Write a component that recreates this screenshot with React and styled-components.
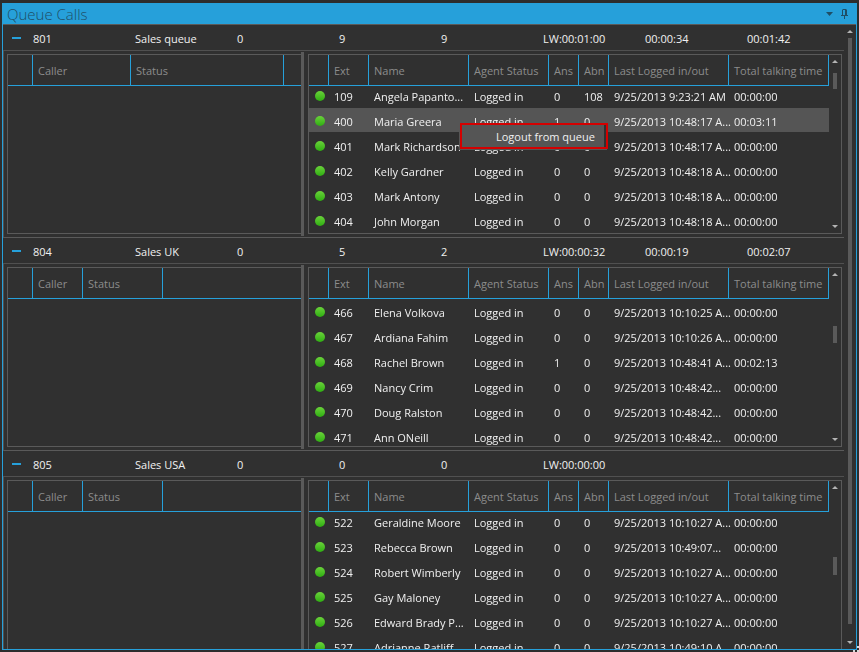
import React, { useLayoutEffect, useRef } from "react";
import styled, { createGlobalStyle } from "styled-components";

const queues = [
  {
    number: "801",
    name: "Sales queue",
    stats: ["0", "9", "9", "LW:00:01:00", "00:00:34", "00:01:42"],
    callerWidth: 98,
    statusWidth: 153,
    scroll: 3,
    thumb: { top: 5, height: 16 },
    agents: [
      ["109", "Angela Papanto...", "0", "108", "9/25/2013 9:23:21 AM", "00:00:00"],
      ["400", "Maria Greera", "1", "0", "9/25/2013 10:48:17 A...", "00:03:11"],
      ["401", "Mark Richardson", "0", "0", "9/25/2013 10:48:17 A...", "00:00:00"],
      ["402", "Kelly Gardner", "0", "0", "9/25/2013 10:48:18 A...", "00:00:00"],
      ["403", "Mark Antony", "0", "0", "9/25/2013 10:48:18 A...", "00:00:00"],
      ["404", "John Morgan", "0", "0", "9/25/2013 10:48:18 A...", "00:00:00"],
    ],
    selected: "400",
  },
  {
    number: "804",
    name: "Sales UK",
    stats: ["0", "5", "2", "LW:00:00:32", "00:00:19", "00:02:07"],
    callerWidth: 50,
    statusWidth: 80,
    scroll: 0,
    thumb: { top: 45, height: 17 },
    agents: [
      ["466", "Elena Volkova", "0", "0", "9/25/2013 10:10:25 A...", "00:00:00"],
      ["467", "Ardiana Fahim", "0", "0", "9/25/2013 10:10:26 A...", "00:00:00"],
      ["468", "Rachel Brown", "1", "0", "9/25/2013 10:48:41 A...", "00:02:13"],
      ["469", "Nancy Crim", "0", "0", "9/25/2013 10:48:42...", "00:00:00"],
      ["470", "Doug Ralston", "0", "0", "9/25/2013 10:48:42...", "00:00:00"],
      ["471", "Ann ONeill", "0", "0", "9/25/2013 10:48:42...", "00:00:00"],
    ],
  },
  {
    number: "805",
    name: "Sales USA",
    stats: ["0", "0", "0", "LW:00:00:00", "", ""],
    callerWidth: 50,
    statusWidth: 80,
    scroll: 3,
    thumb: { top: 63, height: 18 },
    agents: [
      ["522", "Geraldine Moore", "0", "0", "9/25/2013 10:10:27 A...", "00:00:00"],
      ["523", "Rebecca Brown", "0", "0", "9/25/2013 10:49:07...", "00:00:00"],
      ["524", "Robert Wimberly", "0", "0", "9/25/2013 10:10:27 A...", "00:00:00"],
      ["525", "Gay Maloney", "0", "0", "9/25/2013 10:10:27 A...", "00:00:00"],
      ["526", "Edward Brady P...", "0", "0", "9/25/2013 10:10:27 A...", "00:00:00"],
      ["527", "Adrianne Ratliff", "0", "0", "9/25/2013 10:49:10 A...", "00:00:00"],
    ],
  },
];

const agentColumns = [
  { label: "", width: 20 },
  { label: "Ext", width: 40 },
  { label: "Name", width: 100 },
  { label: "Agent Status", width: 80 },
  { label: "Ans", width: 30 },
  { label: "Abn", width: 30 },
  { label: "Last Logged in/out", width: 120 },
  { label: "Total talking time", width: 100 },
];

const ScrollBar = ({ top, height }) => (
  <Bar>
    <Arrow viewBox="0 0 6 3" aria-hidden="true">
      <path d="M0 3L3 0L6 3Z" />
    </Arrow>
    <Track>
      <Thumb style={{ marginTop: top, height }} />
    </Track>
    <Arrow viewBox="0 0 6 3" aria-hidden="true">
      <path d="M0 0L3 3L6 0Z" />
    </Arrow>
  </Bar>
);

const CallerTable = ({ queue }) => (
  <CallerBox>
    <Table $fill>
      <colgroup>
        <col style={{ width: 25 }} />
        <col style={{ width: queue.callerWidth }} />
        <col style={{ width: queue.statusWidth }} />
        <col />
      </colgroup>
      <thead>
        <tr>
          <HeadCell />
          <HeadCell>Caller</HeadCell>
          <HeadCell>Status</HeadCell>
          <HeadCell $last />
        </tr>
      </thead>
    </Table>
  </CallerBox>
);

const AgentTable = ({ queue }) => {
  const view = useRef(null);

  useLayoutEffect(() => {
    view.current.scrollTop = queue.scroll;
  }, [queue.scroll]);

  return (
    <AgentBox>
      <AgentView ref={view}>
        <Table>
          <colgroup>
            {agentColumns.map((column) => (
              <col key={column.label} style={{ width: column.width }} />
            ))}
          </colgroup>
          <thead>
            <tr>
              {agentColumns.map((column) => (
                <HeadCell key={column.label}>{column.label}</HeadCell>
              ))}
            </tr>
          </thead>
          <tbody>
            {queue.agents.map(([ext, name, answered, abandoned, last, total]) => (
              <AgentRow key={ext} $selected={ext === queue.selected}>
                <DotCell>
                  <Dot />
                </DotCell>
                <Cell>{ext}</Cell>
                <Cell>{name}</Cell>
                <Cell>Logged in</Cell>
                <Cell>{answered}</Cell>
                <Cell>{abandoned}</Cell>
                <Cell>{last}</Cell>
                <Cell>{total}</Cell>
              </AgentRow>
            ))}
          </tbody>
        </Table>
      </AgentView>
      <ScrollBar top={queue.thumb.top} height={queue.thumb.height} />
      {queue.selected && (
        <Menu role="menu">
          <MenuItem role="menuitem">Logout from queue</MenuItem>
        </Menu>
      )}
    </AgentBox>
  );
};

const QueueGroup = ({ queue }) => (
  <section>
    <Summary>
      <Toggle aria-label={`Collapse ${queue.name}`} />
      <span>{queue.number}</span>
      <span>{queue.name}</span>
      {queue.stats.map((stat, i) => (
        <span key={i}>{stat}</span>
      ))}
    </Summary>
    <Detail>
      <CallerTable queue={queue} />
      <Splitter />
      <AgentTable queue={queue} />
    </Detail>
  </section>
);

const App = () => {
  return (
    <>
      <GlobalStyle />
      <Frame>
        <Panel>
          <TitleBar>
            <Title>Queue Calls</Title>
            <TitleButton aria-label="Window menu">
              <svg width="7" height="4" viewBox="0 0 7 4">
                <path d="M0 0H7L3.5 4Z" fill="#1f4e66" />
              </svg>
            </TitleButton>
            <TitleButton aria-label="Pin">
              <svg width="7" height="10" viewBox="0 0 7 10">
                <path
                  d="M1 1L2 0H5L6 1V6H7V7H4V10H3V7H0V6H1Z M2 1V6H4V1Z"
                  fill="#1f4e66"
                  fillRule="evenodd"
                />
              </svg>
            </TitleButton>
          </TitleBar>
          <Content>
            <QueueList>
              {queues.map((queue) => (
                <QueueGroup key={queue.number} queue={queue} />
              ))}
            </QueueList>
            <ScrollBar top={0} height="98%" />
          </Content>
        </Panel>
        <Grip viewBox="0 0 6 6" aria-hidden="true">
          <path d="M4 0h2v2h-2z M0 4h2v2h-2z M4 4h2v2h-2z" />
        </Grip>
      </Frame>
    </>
  );
};

export default App;

const GlobalStyle = createGlobalStyle`
  * {
    box-sizing: border-box;
  }
  body {
    margin: 0;
    background: #2d2d2d;
    color: #f0f0f0;
    font: 11px/16px "Open Sans", "Noto Sans", sans-serif;
  }
  button {
    padding: 0;
    border: 0;
    background: none;
    color: inherit;
    font: inherit;
  }
`;

const Frame = styled.div`
  position: relative;
  display: flex;
  height: 100vh;
  padding: 3px 2px 2px;
`;

const Panel = styled.main`
  flex: 1;
  min-width: 0;
  display: flex;
  flex-direction: column;
  border: 1px solid #26a0da;
  border-top: 0;
  background: #303030;
`;

const TitleBar = styled.header`
  flex: none;
  display: flex;
  align-items: center;
  gap: 8px;
  height: 22px;
  padding: 0 8px 0 4px;
  border-bottom: 1px solid #5a5a5a;
  background: #26a0da;
`;

const Title = styled.h1`
  flex: 1;
  margin: 0;
  color: #1f4e66;
  font-size: 15px;
  font-weight: 300;
  line-height: 20px;
`;

const TitleButton = styled.button`
  display: flex;
`;

const Content = styled.div`
  flex: 1;
  min-height: 0;
  display: flex;
  overflow: hidden;
`;

const QueueList = styled.div`
  flex: 1;
  min-width: 0;
`;

const Summary = styled.div`
  display: grid;
  grid-template-columns: 30px repeat(7, 102px) 1fr;
  align-items: center;
  height: 26px;
  padding-top: 2px;
  border-bottom: 1px solid #505050;
  white-space: nowrap;
`;

const Toggle = styled.button`
  width: 9px;
  height: 2px;
  margin: 0 0 2px 9px;
  background: #26a0da;
`;

const Detail = styled.div`
  display: grid;
  grid-template-columns: minmax(0, 1fr) 3px auto;
  grid-template-rows: minmax(0, 1fr);
  height: 187px;
  padding: 0 2px 0 3px;
  border-left: 1px solid #505050;
  border-bottom: 1px solid #5a5a5a;
`;

const Splitter = styled.div`
  margin: 1px 0;
  background: #5a5a5a;
`;

const CallerBox = styled.div`
  margin: 3px 0;
  border: 1px solid #5a5a5a;
  border-right: 0;
`;

const AgentBox = styled.div`
  position: relative;
  display: flex;
  margin: 3px 0 3px 4px;
  border: 1px solid #5a5a5a;
`;

const AgentView = styled.div`
  width: 520px;
  overflow: hidden;
`;

const Table = styled.table`
  width: ${(props) => (props.$fill ? "100%" : "520px")};
  table-layout: fixed;
  border-spacing: 0;
`;

const HeadCell = styled.th`
  position: sticky;
  top: 0;
  height: 31px;
  padding: 2px 0 0 5px;
  border-right: ${(props) => (props.$last ? "0" : "1px solid #26a0da")};
  border-bottom: 1px solid #26a0da;
  background: #303030;
  color: #8c8c8c;
  font-weight: 400;
  text-align: left;
  white-space: nowrap;
`;

const AgentRow = styled.tr`
  background: ${(props) =>
    props.$selected ? "linear-gradient(#555 24px, transparent 24px)" : "none"};
`;

const Cell = styled.td`
  height: 25px;
  padding: 2px 0 0 5px;
  white-space: nowrap;
`;

const DotCell = styled.td`
  height: 25px;
  padding: 0 0 0 6px;
`;

const Dot = styled.span`
  display: block;
  width: 10px;
  height: 10px;
  border-radius: 50%;
  background: linear-gradient(#6ad23a, #2fae12);
`;

const Bar = styled.div`
  flex: none;
  display: flex;
  flex-direction: column;
  align-items: center;
  width: 12px;
  padding: 5px 0;
`;

const Arrow = styled.svg`
  flex: none;
  width: 6px;
  height: 3px;
  fill: #b4b4b4;
`;

const Track = styled.div`
  flex: 1;
  min-height: 0;
  padding: 5px 0;
`;

const Thumb = styled.div`
  width: 4px;
  background: #5a5a5a;
`;

const Menu = styled.div`
  position: absolute;
  z-index: 1;
  top: 68px;
  left: 151px;
  padding-right: 2px;
  border: 2px solid #d40000;
  background: #303030;
  box-shadow: -1px 1px 0 #555;
`;

const MenuItem = styled.button`
  display: block;
  height: 22px;
  padding: 2px 9px 0 34px;
  background: #555;
  white-space: nowrap;
`;

const Grip = styled.svg`
  position: absolute;
  right: 0;
  bottom: 0;
  width: 6px;
  height: 6px;
  fill: #d8d8d8;
`;
